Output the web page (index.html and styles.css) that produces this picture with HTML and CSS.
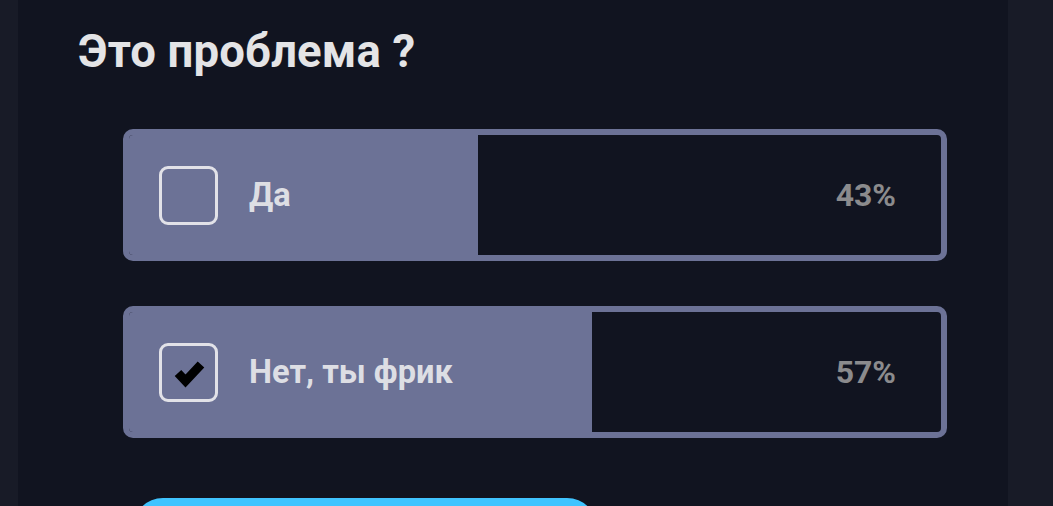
FILE: index.html
```html
<!DOCTYPE html>
<html lang="ru">
<head>
<meta charset="utf-8">
<link rel="stylesheet" href="styles.css">
</head>
<body>
<div class="page">
  <main class="panel">
    <h1 class="title">Это проблема ?</h1>
    <div class="options">
      <div class="option">
        <div class="fill" style="width:43%"></div>
        <div class="content">
          <span class="box"></span>
          <span class="label">Да</span>
          <span class="pct">43%</span>
        </div>
      </div>
      <div class="option">
        <div class="fill" style="width:57%"></div>
        <div class="content">
          <span class="box checked">
            <svg viewBox="0 0 53 53" width="53" height="53"><path d="M16 27 L23.5 35 L39 18.5" fill="none" stroke="#000" stroke-width="9" stroke-linejoin="miter" stroke-linecap="butt"/></svg>
          </span>
          <span class="label">Нет, ты фрик</span>
          <span class="pct">57%</span>
        </div>
      </div>
    </div>
    <button class="submit"></button>
  </main>
</div>
</body>
</html>
```
FILE: styles.css
```css
* { box-sizing: border-box; }
html, body { margin: 0; padding: 0; }
body {
  background: #181b27;
  font-family: Roboto, "Liberation Sans", sans-serif;
  width: 1053px;
  height: 506px;
  overflow: hidden;
}
.page {
  padding: 0 45px 0 18px;
  height: 506px;
}
.panel {
  background: #111420;
  height: 100%;
  padding: 25px 61px 0 60px;
  overflow: hidden;
}
.title {
  margin: 0;
  color: #e4e4e6;
  font-size: 45.5px;
  font-weight: 700;
  line-height: 54px;
  letter-spacing: 0.15px;
}
.options {
  margin: 50px 0 0 45px;
  display: flex;
  flex-direction: column;
  gap: 45px;
}
.option {
  position: relative;
  height: 132px;
  border: 6px solid #6c7296;
  border-radius: 10px;
  background: #111420;
  overflow: hidden;
}
.fill {
  position: absolute;
  left: 0; top: 0; bottom: 0;
  background: #6c7296;
}
.content {
  position: relative;
  height: 100%;
  display: flex;
  align-items: center;
  padding: 0 45px 0 30px;
}
.box {
  width: 59px;
  height: 59px;
  border: 3px solid #e2e2e8;
  border-radius: 9px;
  display: flex;
  align-items: center;
  justify-content: center;
  flex: none;
}
.box svg { display: block; }
.label {
  margin-left: 31px;
  color: #dddee4;
  font-size: 32.6px;
  font-weight: 700;
}
.pct {
  margin-left: auto;
  color: #8b8b8d;
  font-size: 32px;
  font-weight: 700;
}
.submit {
  display: block;
  margin: 60px 0 0 55px;
  width: 464px;
  height: 60px;
  border: 0;
  border-radius: 30px;
  background: #40c4ff;
}
```
